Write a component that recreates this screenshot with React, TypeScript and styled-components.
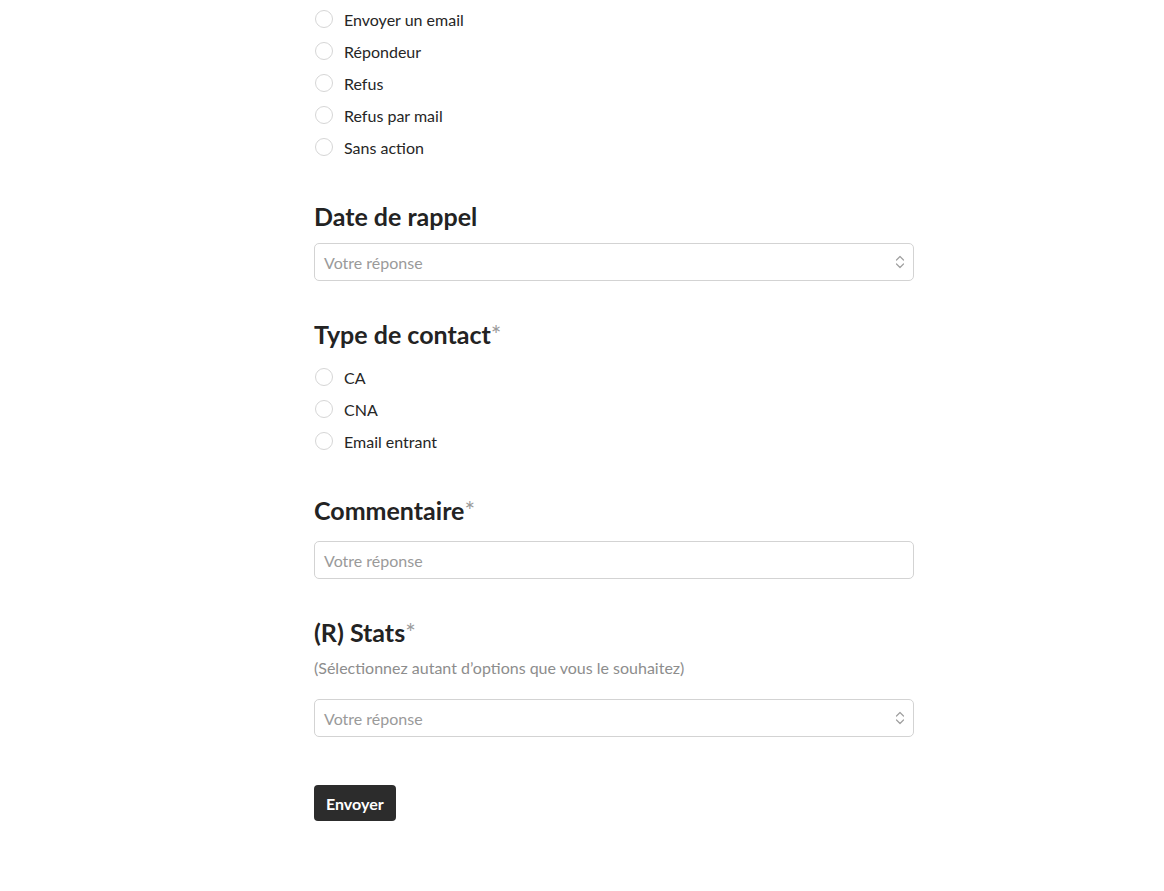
import React from "react";
import styled, { createGlobalStyle } from "styled-components";

const GlobalStyle = createGlobalStyle`
  html, body {
    margin: 0;
    padding: 0;
    background: #fff;
  }
  body {
    font-family: "Lato", "Noto Sans", sans-serif;
    color: #222;
  }
`;

const Page = styled.div`
  padding: 3px 0 60px 314px;
`;

const Form = styled.form`
  width: 600px;
  display: flex;
  flex-direction: column;
`;

const Field = styled.section<{ $first?: boolean }>`
  display: flex;
  flex-direction: column;
  margin-top: ${(p) => (p.$first ? "0" : "38px")};
`;

const Question = styled.h2<{ $gap?: number }>`
  margin: 0 0 ${(p) => p.$gap ?? 12}px 0;
  font-size: 25px;
  line-height: 30px;
  font-weight: 700;
  color: #232323;
`;

const Required = styled.span`
  color: #9b9b9b;
  font-weight: 400;
`;

const Help = styled.p`
  margin: -2px 0 20px 0;
  font-size: 16px;
  line-height: 22px;
  color: #8d8d8d;
`;

const Options = styled.div`
  display: flex;
  flex-direction: column;
`;

const Option = styled.label`
  display: flex;
  align-items: center;
  height: 32px;
  gap: 11px;
  font-size: 16px;
  color: #262626;
  cursor: pointer;
`;

const Radio = styled.span`
  width: 16px;
  height: 16px;
  margin-left: 1px;
  border: 1.5px solid #d6d6d6;
  border-radius: 50%;
  flex-shrink: 0;
`;

const InputBox = styled.div`
  display: flex;
  align-items: center;
  justify-content: space-between;
  height: 38px;
  box-sizing: border-box;
  border: 1px solid #d3d3d3;
  border-radius: 5px;
  padding: 0 8px 0 9px;
`;

const Placeholder = styled.span`
  font-size: 16px;
  color: #9a9a9a;
`;

const SubmitRow = styled.div`
  margin-top: 48px;
`;

const Submit = styled.button`
  height: 36px;
  padding: 0 12px;
  border: none;
  border-radius: 4px;
  background: #2c2c2c;
  color: #fff;
  font-family: "Lato", "Noto Sans", sans-serif;
  font-size: 16px;
  font-weight: 700;
  cursor: pointer;
`;

const Chevrons = () => (
  <svg width="10" height="14" viewBox="0 0 10 14" fill="none" stroke="#a0a0a0" strokeWidth="1.2" strokeLinecap="round" strokeLinejoin="round">
    <path d="M1.5 5 L5 1.5 L8.5 5" />
    <path d="M1.5 9 L5 12.5 L8.5 9" />
  </svg>
);

const RadioList = ({ items }: { items: string[] }) => (
  <Options>
    {items.map((item) => (
      <Option key={item}>
        <Radio />
        {item}
      </Option>
    ))}
  </Options>
);

export default function App() {
  return (
    <>
      <GlobalStyle />
      <Page>
        <Form onSubmit={(e) => e.preventDefault()}>
          <Field $first>
            <RadioList items={["Envoyer un email", "Répondeur", "Refus", "Refus par mail", "Sans action"]} />
          </Field>

          <Field>
            <Question>Date de rappel</Question>
            <InputBox>
              <Placeholder>Votre réponse</Placeholder>
              <Chevrons />
            </InputBox>
          </Field>

          <Field>
            <Question>
              Type de contact<Required>*</Required>
            </Question>
            <RadioList items={["CA", "CNA", "Email entrant"]} />
          </Field>

          <Field>
            <Question $gap={16}>
              Commentaire<Required>*</Required>
            </Question>
            <InputBox>
              <Placeholder>Votre réponse</Placeholder>
            </InputBox>
          </Field>

          <Field>
            <Question>
              (R) Stats<Required>*</Required>
            </Question>
            <Help>(Sélectionnez autant d’options que vous le souhaitez)</Help>
            <InputBox>
              <Placeholder>Votre réponse</Placeholder>
              <Chevrons />
            </InputBox>
          </Field>

          <SubmitRow>
            <Submit type="submit">Envoyer</Submit>
          </SubmitRow>
        </Form>
      </Page>
    </>
  );
}
